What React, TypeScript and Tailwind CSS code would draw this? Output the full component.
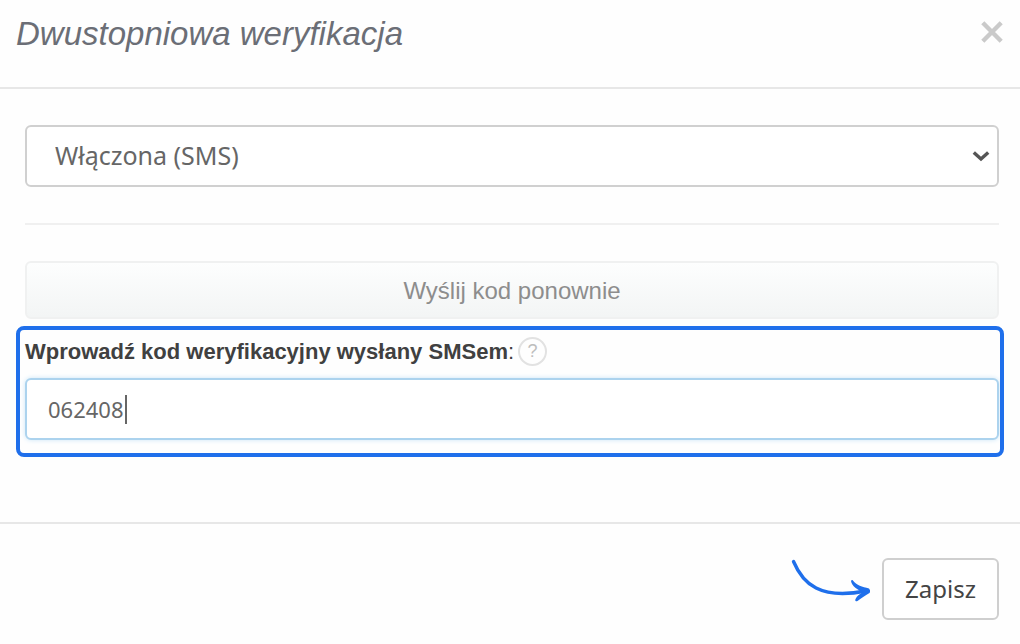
import { useState } from "react";

function CloseIcon() {
  return (
    <svg width="22" height="22" viewBox="0 0 22 22" fill="none" stroke="#cacaca" strokeWidth="4.4" aria-hidden="true">
      <path d="M1.8 1.8 20.2 20.2M20.2 1.8 1.8 20.2" />
    </svg>
  );
}

function ChevronIcon() {
  return (
    <svg width="18" height="12" viewBox="0 0 18 12" fill="none" stroke="#555" strokeWidth="3.4" aria-hidden="true">
      <path d="M1.8 2.4 9 9 16.2 2.4" />
    </svg>
  );
}

function ArrowHint() {
  return (
    <svg width="80" height="44" viewBox="0 0 80 44" fill="none" aria-hidden="true">
      <path d="M3.5 3.5C13 26 30 42 76 33" stroke="#1f6feb" strokeWidth="3.4" strokeLinecap="round" />
      <path
        d="M62.5 22C67 28 72 28.500 79 30.500Q81 33 79.500 35C75 38 71 40 67.500 43Q64.500 44 65.500 41C67 37.500 70 36 73 34C68 32 61.500 28 61 23Q61.500 21.500 62.500 22Z"
        fill="#1f6feb"
      />
    </svg>
  );
}

export default function App() {
  const [method, setMethod] = useState("sms");
  const [code, setCode] = useState("062408");

  return (
    <main className="min-h-screen w-full bg-[#fefefe] font-['Liberation_Sans',Arial,sans-serif] text-[#444]">
      {/* Header */}
      <header className="flex h-[89px] items-start justify-between border-b-2 border-[#e7e7e7] pt-3 pr-[17px] pl-4">
        <h1 className="text-[33px] leading-[44px] text-[#6b6e76] italic">Dwustopniowa weryfikacja</h1>
        <button type="button" aria-label="Zamknij" className="mt-[9px]">
          <CloseIcon />
        </button>
      </header>

      {/* Body */}
      <section className="border-b-2 border-[#e7e7e7] pt-9 pr-[21px] pb-[82px] pl-[25px]">
        <div className="relative">
          <select
            aria-label="Metoda weryfikacji"
            value={method}
            onChange={(e) => setMethod(e.target.value)}
            className="block h-[62px] w-full appearance-none rounded-md border-2 border-[#d0d0d0] bg-white px-7 font-['Noto_Sans',sans-serif] text-[25px] text-[#666]"
          >
            <option value="sms">Włączona (SMS)</option>
            <option value="off">Wyłączona</option>
          </select>
          <span className="pointer-events-none absolute inset-y-0 right-[9px] flex items-center">
            <ChevronIcon />
          </span>
        </div>

        <hr className="my-9 border-t-2 border-[#f0f0f0]" />

        <button
          type="button"
          className="h-[58px] w-full rounded-md border-2 border-[#f0f1f1] bg-linear-to-b from-[#fdfefe] to-[#f3f5f5] pt-[2px] text-[24px] text-[#8d8d8d]"
        >
          Wyślij kod ponownie
        </button>

        <div className="relative mt-4">
          <div className="flex h-8 items-center text-[22px] text-[#404040]">
            <label htmlFor="code">
              <b>Wprowadź kod weryfikacyjny wysłany SMSem</b>:
            </label>
            <button
              type="button"
              aria-label="Pomoc"
              className="ml-1 size-[29px] rounded-full border-2 border-[#e2e2e2] text-[18px] leading-none text-[#bdbdbd]"
            >
              ?
            </button>
          </div>
          <div className="relative mt-[11px]">
            <input
              id="code"
              inputMode="numeric"
              value={code}
              onChange={(e) => setCode(e.target.value)}
              className="block h-[62px] w-full rounded-md border-2 border-[#acd3ee] bg-white px-[21px] font-['Noto_Sans',sans-serif] text-[22px] text-[#666] shadow-[0_0_5px_#cbe6f8] outline-none"
            />
            <span className="pointer-events-none absolute top-[17px] left-[100px] h-[29px] w-[2px] bg-[#666]" />
          </div>
          <div className="pointer-events-none absolute -top-[9px] -right-[5px] -bottom-[17px] -left-[9px] rounded-lg border-4 border-[#1f6feb]" />
        </div>
      </section>

      {/* Footer */}
      <footer className="flex items-start justify-end gap-3 pt-[34px] pr-[21px] pb-6">
        <ArrowHint />
        <button
          type="button"
          className="h-[62px] rounded-md border-2 border-[#cfcfcf] bg-white px-[21px] font-['Noto_Sans',sans-serif] text-[24px] text-[#444]"
        >
          Zapisz
        </button>
      </footer>
    </main>
  );
}
